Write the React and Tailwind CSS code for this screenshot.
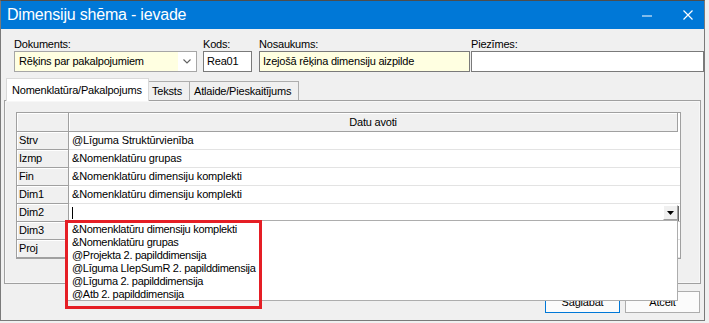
import React from "react";

const F = "font-['Liberation_Sans',Arial,sans-serif]";

function RowHead({ children, h = "h-[18px]" }) {
  return (
    <div className={`${h} w-[52px] shrink-0 bg-[#f0f0f0] border-r border-b border-[#a0a0a0] shadow-[inset_1px_1px_0_#ffffff] pl-[2px] flex items-center text-[11px] tracking-[-0.2px] text-black`}>
      {children}
    </div>
  );
}

function DataCell({ children }) {
  return (
    <div className="h-[18px] flex-1 bg-white border-b border-[#e3e3e3] pl-[3px] flex items-center text-[11px] tracking-[-0.15px] text-black whitespace-nowrap">
      {children}
    </div>
  );
}

const rows = [
  ["Strv", "@Līguma Struktūrvienība"],
  ["Izmp", "&Nomenklatūru grupas"],
  ["Fin", "&Nomenklatūru dimensiju komplekti"],
  ["Dim1", "&Nomenklatūru dimensiju komplekti"],
];

const items = [
  "&Nomenklatūru dimensiju komplekti",
  "&Nomenklatūru grupas",
  "@Projekta 2. papilddimensija",
  "@Līguma LIepSumR 2. papilddimensija",
  "@Līguma 2. papilddimensija",
  "@Atb 2. papilddimensija",
];

export default function App() {
  return (
    <div className={`${F} relative w-[709px] h-[323px] bg-[#f0f0f0] overflow-hidden`}>
      <div className="w-[705px] h-[321px] border border-[#7a7a7a] border-t-[#4d4d4d] bg-[#f0f0f0] flex flex-col">
        {/* title bar */}
        <div className="h-[28px] bg-[#0078d7] flex items-center pl-[6px] shrink-0">
          <div className="text-white text-[16px] tracking-[-0.2px] leading-none">Dimensiju shēma - ievade</div>
          <div className="flex-1" />
          <svg width="10" height="2" className="mr-[31px] mt-[2px]" viewBox="0 0 10 2">
            <rect x="0" y="0.5" width="10" height="1" fill="#ffffff" />
          </svg>
          <svg width="10" height="10" className="mr-[11px]" viewBox="0 0 10 10">
            <path d="M0.5 0.5 L9.5 9.5 M9.5 0.5 L0.5 9.5" stroke="#ffffff" strokeWidth="1.2" />
          </svg>
        </div>

        {/* form fields */}
        <div className="flex pl-[13px] pt-[8px] text-[11px] tracking-[-0.2px] text-black shrink-0">
          <div className="w-[183px] flex flex-col">
            <div className="h-[14px] leading-[14px]">Dokuments:</div>
            <div className="h-[21px] border border-[#a6a6a6] bg-[#ffffe1] flex items-center">
              <div className="flex-1 pl-[4px] whitespace-nowrap">Rēķins par pakalpojumiem</div>
              <div className="w-[18px] h-full bg-white flex items-center justify-center">
                <svg width="8" height="5" viewBox="0 0 8 5">
                  <path d="M0.5 0.5 L4 4 L7.5 0.5" stroke="#606060" strokeWidth="1.1" fill="none" />
                </svg>
              </div>
            </div>
          </div>
          <div className="w-[49px] ml-[6px] flex flex-col">
            <div className="h-[14px] leading-[14px]">Kods:</div>
            <div className="h-[21px] border border-[#7a7a7a] bg-white pl-[3px] flex items-center">Rea01</div>
          </div>
          <div className="w-[211px] ml-[7px] flex flex-col">
            <div className="h-[14px] leading-[14px]">Nosaukums:</div>
            <div className="h-[21px] border border-[#7a7a7a] bg-[#ffffe1] pl-[3px] flex items-center whitespace-nowrap">Izejošā rēķina dimensiju aizpilde</div>
          </div>
          <div className="flex-1 ml-[1px] flex flex-col">
            <div className="h-[14px] leading-[14px]">Piezīmes:</div>
            <div className="h-[21px] border border-[#7a7a7a] bg-white" />
          </div>
        </div>

        {/* tabs */}
        <div className="flex items-end pl-[5px] mt-[7px] h-[21px] text-[11px] tracking-[-0.2px] text-black shrink-0 relative z-10">
          <div className="w-[143px] h-[23px] bg-white border border-b-0 border-[#d9d9d9] pl-[5px] flex items-center -mb-[1px]">Nomenklatūra/Pakalpojums</div>
          <div className="w-[41px] h-[19px] bg-[#f0f0f0] border border-b-0 border-l-0 border-[#adadad] pl-[3px] flex items-center">Teksts</div>
          <div className="w-[109px] h-[19px] bg-[#f0f0f0] border border-b-0 border-l-0 border-[#adadad] pl-[4px] flex items-center">Atlaide/Pieskaitījums</div>
        </div>

        {/* tab panel */}
        <div className="ml-[3px] w-[697px] h-[184px] border border-[#a0a0a0] bg-[#f0f0f0] shrink-0">
          <div className="h-full border border-[#f7f7f7] pl-[10px] pt-[10px]">
            {/* grid */}
            <div className="w-[665px] border border-[#a0a0a0] bg-white flex flex-col">
              <div className="flex">
                <RowHead h="h-[19px]">{""}</RowHead>
                <div className="h-[19px] flex-1 flex">
                  <div className="flex-1 bg-[#f0f0f0] border-r border-b border-[#a0a0a0] shadow-[inset_1px_1px_0_#ffffff] flex items-center justify-center text-[11px] tracking-[-0.2px]">Datu avoti</div>
                  <div className="w-[2px] bg-white" />
                </div>
              </div>
              {rows.map(([k, v]) => (
                <div key={k} className="flex">
                  <RowHead>{k}</RowHead>
                  <DataCell>{v}</DataCell>
                </div>
              ))}
              <div className="flex">
                <RowHead>Dim2</RowHead>
                <div className="h-[18px] flex-1 bg-white border-b border-[#c8c8c8] pl-[3px] pr-[2px] flex items-center">
                  <div className="w-px h-[12px] bg-black" />
                  <div className="flex-1" />
                  <div className="w-[15px] h-[15px] bg-[#f0f0f0] border border-[#a0a0a0] border-t-white border-l-white shadow-[1px_1px_0_#696969] flex items-center justify-center">
                    <svg width="7" height="4" viewBox="0 0 7 4">
                      <path d="M0 0 L7 0 L3.5 4 Z" fill="#000000" />
                    </svg>
                  </div>
                </div>
              </div>
              <div className="flex">
                <RowHead>Dim3</RowHead>
                <DataCell>{""}</DataCell>
              </div>
              <div className="flex">
                <RowHead>Proj</RowHead>
                <DataCell>{""}</DataCell>
              </div>
            </div>
          </div>
        </div>

        {/* buttons */}
        <div className="flex justify-end gap-[5px] pr-[4px] mt-[7px] text-[11px] tracking-[-0.2px] text-black shrink-0">
          <div className="w-[75px] h-[22px] border border-[#0078d7] bg-[#fbfbfb] flex items-center justify-center">Saglabāt</div>
          <div className="w-[75px] h-[22px] border border-[#adadad] bg-[#fbfbfb] flex items-center justify-center">Atcelt</div>
        </div>
      </div>

      {/* dropdown list overlay */}
      <div className="absolute left-[65px] top-[220px] w-[613px] h-[81px] bg-white border border-[#adadad] pl-[6px] pt-[2px] text-[11px] tracking-[-0.3px] text-black leading-[13px] z-20">
        {items.map((t) => (
          <div key={t} className="h-[13px] whitespace-nowrap">{t}</div>
        ))}
      </div>

      {/* red annotation box */}
      <div className="absolute left-[65px] top-[220px] w-[197px] h-[89px] border-[3px] border-[#e51e25] z-30" />
    </div>
  );
}
